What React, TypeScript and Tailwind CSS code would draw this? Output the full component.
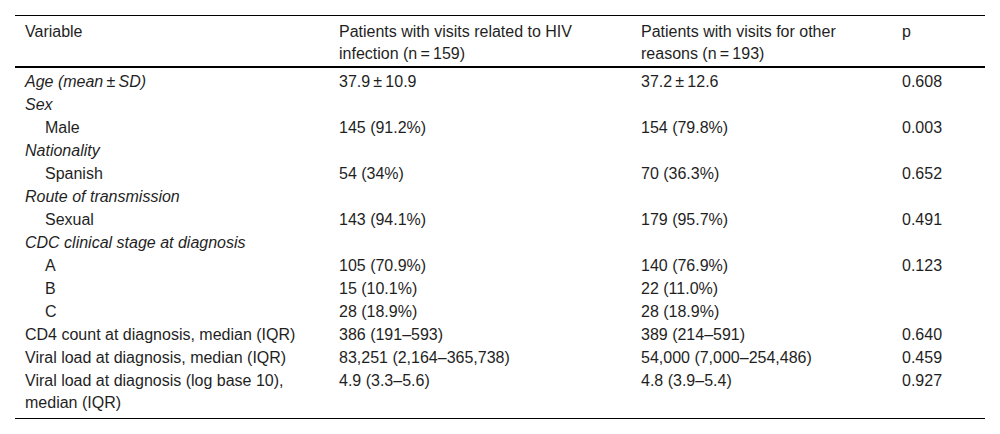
const ROWS: Array<{ label: string; kind: 'head' | 'sub' | 'plain'; a?: string; b?: string; p?: string }> = [
  { label: 'Age (mean\u2009±\u2009SD)', kind: 'head', a: '37.9\u2009±\u200910.9', b: '37.2\u2009±\u200912.6', p: '0.608' },
  { label: 'Sex', kind: 'head' },
  { label: 'Male', kind: 'sub', a: '145 (91.2%)', b: '154 (79.8%)', p: '0.003' },
  { label: 'Nationality', kind: 'head' },
  { label: 'Spanish', kind: 'sub', a: '54 (34%)', b: '70 (36.3%)', p: '0.652' },
  { label: 'Route of transmission', kind: 'head' },
  { label: 'Sexual', kind: 'sub', a: '143 (94.1%)', b: '179 (95.7%)', p: '0.491' },
  { label: 'CDC clinical stage at diagnosis', kind: 'head' },
  { label: 'A', kind: 'sub', a: '105 (70.9%)', b: '140 (76.9%)', p: '0.123' },
  { label: 'B', kind: 'sub', a: '15 (10.1%)', b: '22 (11.0%)' },
  { label: 'C', kind: 'sub', a: '28 (18.9%)', b: '28 (18.9%)' },
  { label: 'CD4 count at diagnosis, median (IQR)', kind: 'plain', a: '386 (191–593)', b: '389 (214–591)', p: '0.640' },
  { label: 'Viral load at diagnosis, median (IQR)', kind: 'plain', a: '83,251 (2,164–365,738)', b: '54,000 (7,000–254,486)', p: '0.459' },
  { label: 'Viral load at diagnosis (log base 10), median (IQR)', kind: 'plain', a: '4.9 (3.3–5.6)', b: '4.8 (3.9–5.4)', p: '0.927' },
];

const HEAD = [
  'Variable',
  'Patients with visits related to HIV infection (n\u2009=\u2009159)',
  'Patients with visits for other reasons (n\u2009=\u2009193)',
  'p',
];

export default function App() {
  return (
    <div className="w-[1000px] h-[434px] bg-white px-[15px] pt-[15px] font-['Liberation_Sans',Arial,sans-serif] text-[16px] leading-[22px] text-[#1f1f1f]">
      <table className="w-[970px] table-fixed border-collapse">
        <colgroup>
          <col className="w-[314px]" />
          <col className="w-[302px]" />
          <col className="w-[261px]" />
          <col className="w-[93px]" />
        </colgroup>
        <thead>
          <tr className="border-t border-black border-b-2 align-top text-left">
            {HEAD.map((h) => (
              <th key={h} className="font-normal px-[10px] pt-[5px] pb-[1px]">{h}</th>
            ))}
          </tr>
        </thead>
        <tbody className="border-b border-black">
          {ROWS.map((r, i) => {
            const first = i === 0;
            const last = i === ROWS.length - 1;
            const pad = `${first ? 'pt-[3px]' : 'pt-[1px]'} ${last ? 'pb-[4px]' : 'pb-0'}`;
            return (
              <tr key={i} className="align-top">
                <td className={`px-[10px] ${pad} ${r.kind === 'head' ? 'italic' : ''}`}>
                  <span className={r.kind === 'sub' ? 'pl-[20px]' : ''}>{r.label}</span>
                </td>
                <td className={`px-[10px] ${pad}`}>{r.a}</td>
                <td className={`px-[10px] ${pad}`}>{r.b}</td>
                <td className={`px-[10px] ${pad}`}>{r.p}</td>
              </tr>
            );
          })}
        </tbody>
      </table>
    </div>
  );
}
